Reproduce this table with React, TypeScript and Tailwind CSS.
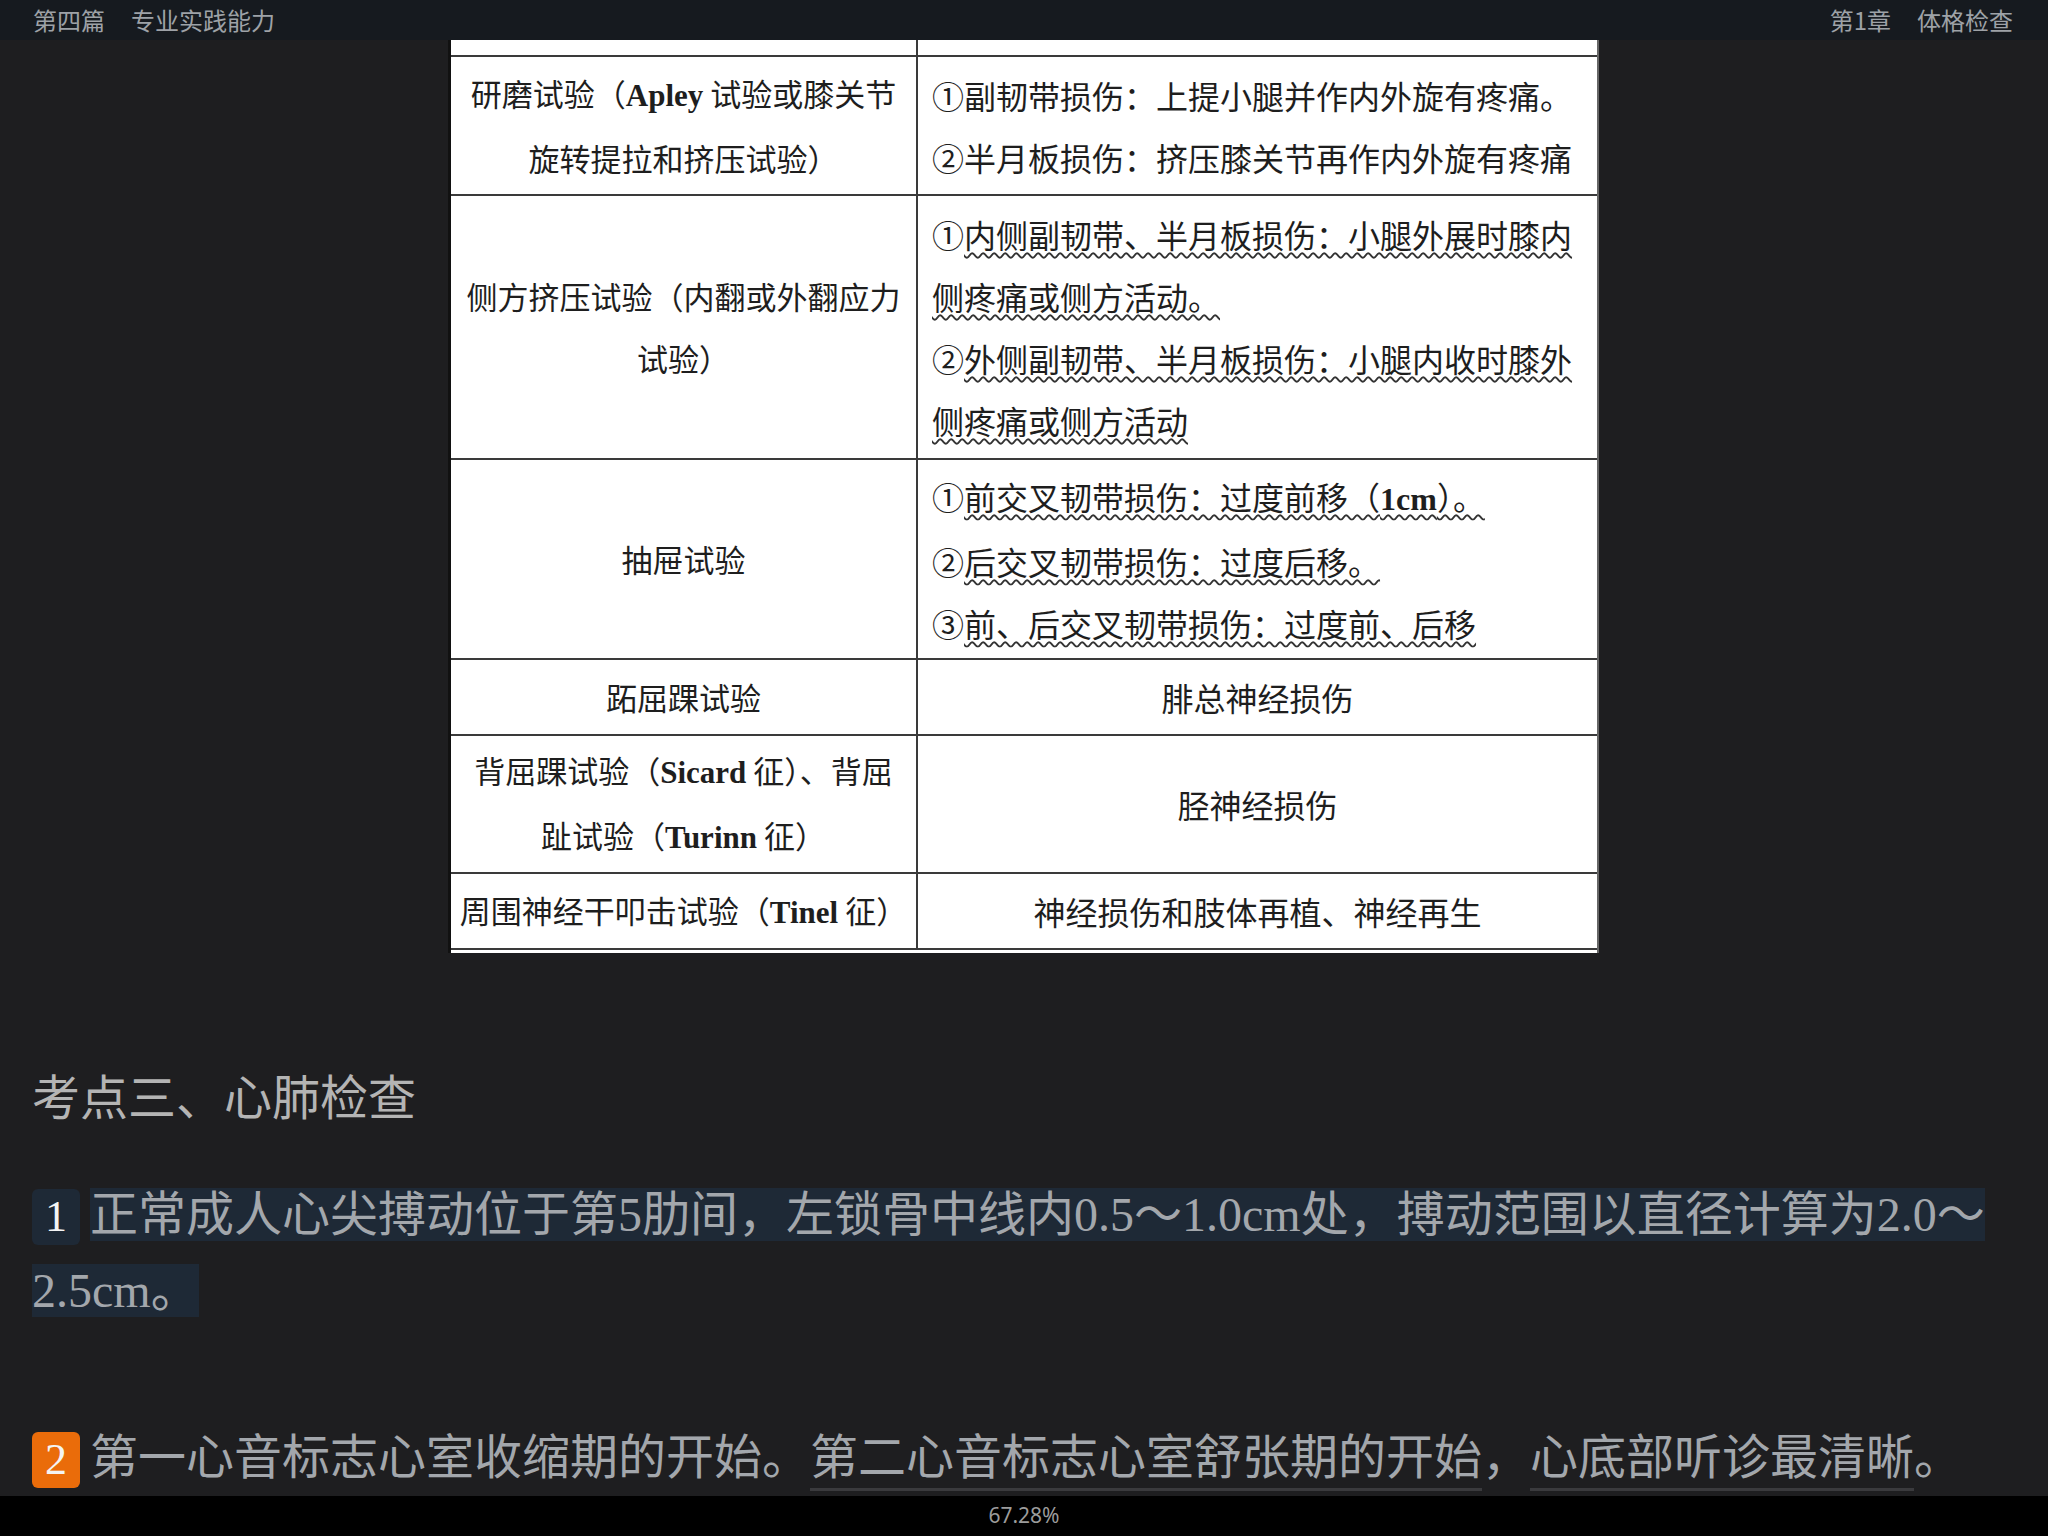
import type { ReactNode } from "react";

function Lat({ children }: { children: ReactNode }) {
  return <span className="font-['Liberation_Serif',serif] font-bold">{children}</span>;
}

function Wavy({ children }: { children: ReactNode }) {
  return (
    <span className="underline decoration-wavy decoration-[#333] decoration-[1.5px] underline-offset-[4px]">
      {children}
    </span>
  );
}

interface RowProps {
  height: string;
  left: ReactNode;
  right: ReactNode;
  rightCenter?: boolean;
}

function Row({ height, left, right, rightCenter }: RowProps) {
  return (
    <div className={`flex ${height} border-b-2 border-[#3a3a3a]`}>
      <div className="w-[467px] shrink-0 border-r-2 border-[#3a3a3a] flex items-center justify-center text-center whitespace-nowrap text-[31px]">
        <div>{left}</div>
      </div>
      <div
        className={`flex-1 flex items-center whitespace-nowrap text-[32px] ${
          rightCenter ? "justify-center text-center" : "pl-[14px]"
        }`}
      >
        <div>{right}</div>
      </div>
    </div>
  );
}

function KneeTable() {
  return (
    <div className="w-[1151px] bg-white border-l-[3px] border-l-[#111] border-r-2 border-r-[#666] pb-[3px] leading-[62px] text-[#1e1e1e] font-['Noto_Sans_CJK_SC',sans-serif]">
      {/* tail of the previous row, cut by the header */}
      <div className="flex h-[17px] border-b-2 border-[#3a3a3a]">
        <div className="w-[467px] shrink-0 border-r-2 border-[#3a3a3a]" />
        <div className="flex-1" />
      </div>
      <Row
        height="h-[139px]"
        left={
          <>
            研磨试验（<Lat>Apley</Lat> 试验或膝关节
            <br />
            旋转提拉和挤压试验）
          </>
        }
        right={
          <>
            ①副韧带损伤：上提小腿并作内外旋有疼痛。
            <br />
            ②半月板损伤：挤压膝关节再作内外旋有疼痛
          </>
        }
      />
      <Row
        height="h-[264px]"
        left={
          <>
            侧方挤压试验（内翻或外翻应力
            <br />
            试验）
          </>
        }
        right={
          <>
            ①<Wavy>内侧副韧带、半月板损伤：小腿外展时膝内</Wavy>
            <br />
            <Wavy>侧疼痛或侧方活动。</Wavy>
            <br />
            ②<Wavy>外侧副韧带、半月板损伤：小腿内收时膝外</Wavy>
            <br />
            <Wavy>侧疼痛或侧方活动</Wavy>
          </>
        }
      />
      <Row
        height="h-[200px]"
        left={<>抽屉试验</>}
        right={
          <>
            ①<Wavy>前交叉韧带损伤：过度前移（<Lat>1cm</Lat>）。</Wavy>
            <br />
            ②<Wavy>后交叉韧带损伤：过度后移。</Wavy>
            <br />
            ③<Wavy>前、后交叉韧带损伤：过度前、后移</Wavy>
          </>
        }
      />
      <Row height="h-[76px]" left={<>跖屈踝试验</>} right={<>腓总神经损伤</>} rightCenter />
      <Row
        height="h-[138px]"
        left={
          <>
            背屈踝试验（<Lat>Sicard</Lat> 征）、背屈
            <br />
            趾试验（<Lat>Turinn</Lat> 征）
          </>
        }
        right={<>胫神经损伤</>}
        rightCenter
      />
      <Row
        height="h-[76px]"
        left={
          <>
            周围神经干叩击试验（<Lat>Tinel</Lat> 征）
          </>
        }
        right={<>神经损伤和肢体再植、神经再生</>}
        rightCenter
      />
    </div>
  );
}

function Badge({ n, color }: { n: string; color: string }) {
  return (
    <span
      className={`inline-block w-[48px] h-[56px] leading-[56px] text-center text-[44px] text-[#f4f4f4] rounded-[6px] mr-[10px] ${color}`}
    >
      {n}
    </span>
  );
}

export default function App() {
  return (
    <div className="w-[2048px] h-[1536px] flex flex-col overflow-hidden bg-[#1e1e20] font-['Noto_Sans_CJK_SC',sans-serif]">
      {/* header */}
      <div className="h-[40px] shrink-0 bg-[#161a1f] flex items-center justify-between pl-[33px] pr-[35px] text-[24px] leading-[40px] text-[#9ea2a7]">
        <div className="flex gap-[26px]">
          <span>第四篇</span>
          <span>专业实践能力</span>
        </div>
        <div className="flex gap-[26px]">
          <span>第1章</span>
          <span>体格检查</span>
        </div>
      </div>

      <main className="flex-1 overflow-hidden">
        <div className="pl-[448px]">
          <KneeTable />
        </div>

        <div className="px-[32px]">
          <h2 className="mt-[111px] text-[48px] leading-[60px] text-[#b4b4b4]">考点三、心肺检查</h2>

          <p className="mt-[53px] text-[48px] leading-[76px] text-[#a3a7ac] font-['Liberation_Serif','Noto_Sans_CJK_SC',serif]">
            <Badge n="1" color="bg-[#1e2936]" />
            <span className="bg-[#1e2936]">
              正常成人心尖搏动位于第5肋间，左锁骨中线内0.5～1.0cm处，搏动范围以直径计算为2.0～
            </span>
            <span className="bg-[#1e2936]">2.5cm。</span>
          </p>

          <p className="mt-[91px] text-[48px] leading-[76px] text-[#a3a7ac] font-['Liberation_Serif','Noto_Sans_CJK_SC',serif]">
            <Badge n="2" color="bg-[#ea6c0a]" />
            第一心音标志心室收缩期的开始。
            <span className="border-b-[3px] border-[#3a3a3d] pb-[4px]">第二心音标志心室舒张期的开始</span>，
            <span className="border-b-[3px] border-[#3a3a3d] pb-[4px]">心底部听诊最清晰</span>。
          </p>
        </div>
      </main>

      {/* footer */}
      <div className="h-[40px] shrink-0 bg-black flex items-center justify-center text-[21px] text-[#9c9c9c] font-['Noto_Sans',sans-serif]">
        67.28%
      </div>
    </div>
  );
}
